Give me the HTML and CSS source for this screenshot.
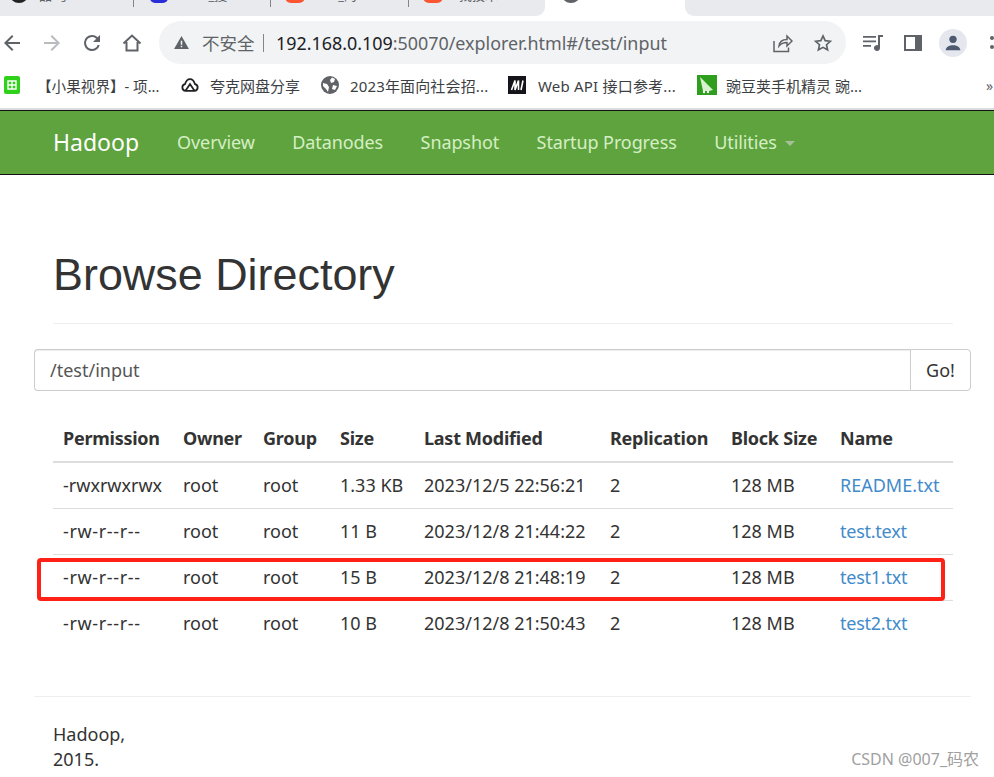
FILE: index.html
```html
<!DOCTYPE html>
<html lang="zh-CN">
<head>
<meta charset="utf-8">
<title>Browsing HDFS</title>
<link rel="stylesheet" href="styles.css">
</head>
<body>
<header class="chrome">
  <div class="tabstrip">
    <div class="tab tab-a"><span class="favicon fav-black"></span><span class="tab-label">品·号</span></div>
    <div class="tab tab-b"><span class="favicon fav-blue"></span><span class="tab-label">csdn_搜</span></div>
    <div class="tab tab-c"><span class="favicon fav-orange"></span><span class="tab-label">007_的</span></div>
    <div class="tab tab-d"><span class="favicon fav-orange"></span><span class="tab-label">找技术</span></div>
    <div class="tab tab-active"><span class="favicon fav-ring"></span><span class="tab-label">Browse</span></div>
    <div class="tab tab-rest"><span class="tab-plus">+</span></div>
  </div>
  <div class="toolbar">
    <svg class="nav-btn" viewBox="0 0 24 24"><path fill="#5f6368" d="M20 11H7.830l5.590-5.590L12 4l-8 8 8 8 1.410-1.410L7.830 13H20z"/></svg>
    <svg class="nav-btn" viewBox="0 0 24 24"><path fill="#b9bbbe" d="M12 4l-1.410 1.410L16.170 11H4v2h12.170l-5.580 5.590L12 20l8-8z"/></svg>
    <svg class="nav-btn" viewBox="0 0 24 24"><path fill="#5f6368" d="M17.650 6.350A7.960 7.960 0 0 0 12 4a8 8 0 1 0 7.730 10h-2.080A6 6 0 1 1 12 6c1.660 0 3.140.69 4.220 1.780L13 11h7V4z"/></svg>
    <svg class="nav-btn" viewBox="0 0 24 24"><path fill="none" stroke="#5f6368" stroke-width="2" d="M6.500 11v8.500h11V11M3.500 12.500 12 4.500l8.500 8"/></svg>
    <div class="omnibox">
      <svg class="omni-warn" viewBox="0 0 16 14"><path fill="#5f6368" d="M8 0l8 14H0z"/><path fill="#f1f3f4" d="M7.200 5h1.600v4.500H7.200zM7.200 10.500h1.600V12H7.200z"/></svg>
      <span class="omni-insecure">不安全</span>
      <span class="omni-sep"></span>
      <span class="omni-url"><span class="omni-host">192.168.0.109</span>:50070/explorer.html#/test/input</span>
      <svg class="omni-icon" viewBox="0 0 20 20"><path fill="none" stroke="#5f6368" stroke-width="1.500" d="M1 8v10.500h14.500v-4M6 13c.5-4 3.500-6.500 8-6.500V3l5 5-5 5V9.500C10.500 9.500 8 10.500 6 13z"/></svg>
      <svg class="omni-icon omni-star" viewBox="0 0 24 24"><path fill="none" stroke="#5f6368" stroke-width="2" d="M12 3.500l2.600 5.700 6.200.7-4.600 4.200 1.300 6.100L12 17.200l-5.500 3 1.300-6.100-4.600-4.200 6.200-.7z"/></svg>
    </div>
    <svg class="tool-icon tool-list" viewBox="0 0 20 16"><path fill="#5f6368" d="M0 1h13v1.800H0zM0 5.500h13v1.800H0zM0 10h8v1.800H0zM15 0h5v2h-3v11a3 3 0 1 1-2-2.800z"/></svg>
    <svg class="tool-icon tool-panel" viewBox="0 0 18 16"><path fill="#5f6368" fill-rule="evenodd" d="M0 0h18v16H0zM2 2v12h9V2z"/></svg>
    <span class="avatar"><svg viewBox="0 0 24 24"><circle cx="12" cy="8" r="4" fill="#4d5a70"/><path fill="#4d5a70" d="M4 20c0-3.500 4-5.500 8-5.500s8 2 8 5.500z"/></svg></span>
    <span class="menu-dots"><i></i><i></i></span>
  </div>
  <div class="bookmarks">
    <div class="bm bm-1"><svg class="bm-icon" viewBox="0 0 16 18"><rect width="16" height="18" rx="2" fill="#2fd11b"/><path fill="none" stroke="#fff" stroke-width="1.400" d="M4 5h8v8H4zM8 5v8M4 9h8"/></svg><span>【小果视界】- 项...</span></div>
    <div class="bm bm-2"><svg class="bm-icon" viewBox="0 0 20 16"><path fill="none" stroke="#202124" stroke-width="2" d="M5 14.500a3.800 3.800 0 0 1-.5-7.500C5.500 3.500 8 1.500 10 1.500s4.500 2 5.500 5.500a3.800 3.800 0 0 1-.5 7.500zM5 14.500 10 7l5 7.500"/></svg><span>夸克网盘分享</span></div>
    <div class="bm bm-3"><svg class="bm-icon" viewBox="0 0 18 18"><circle cx="9" cy="9" r="9" fill="#5f6368"/><path fill="#fff" d="M2 7l4 1 2 3-1 5-2-3-3-3zM11 1.500l3 1.500-1 3-3 1-1-3zM12 9l4 1-2 4-3-1z"/></svg><span>2023年面向社会招...</span></div>
    <div class="bm bm-4"><svg class="bm-icon" viewBox="0 0 18 18"><rect width="18" height="18" fill="#15141a"/><path fill="none" stroke="#fff" stroke-width="1.600" d="M3.500 14 7 4.500V14l3.500-9.500V14M13 14l2-9.500"/></svg><span>Web API 接口参考...</span></div>
    <div class="bm bm-5"><svg class="bm-icon" viewBox="0 0 20 20"><rect width="20" height="20" fill="#2f9e1f"/><path fill="#d6f2d0" d="M3 2c3 3 8 8 13 13l-4 1H6z"/><circle cx="7" cy="17" r="1.200" fill="#fff"/><circle cx="11" cy="17" r="1.200" fill="#fff"/></svg><span>豌豆荚手机精灵 豌...</span></div>
    <span class="bm-more">»</span>
  </div>
</header>

<nav class="navbar">
  <a class="brand">Hadoop</a>
  <a class="nav-link">Overview</a>
  <a class="nav-link">Datanodes</a>
  <a class="nav-link">Snapshot</a>
  <a class="nav-link">Startup Progress</a>
  <a class="nav-link">Utilities<span class="caret"></span></a>
</nav>

<main class="container">
  <div class="page-header"><h1>Browse Directory</h1></div>
  <div class="path-group">
    <div class="path-input">/test/input</div>
    <div class="path-go">Go!</div>
  </div>
  <table class="listing">
    <colgroup>
      <col class="c1"><col class="c2"><col class="c3"><col class="c4"><col class="c5"><col class="c6"><col class="c7"><col class="c8">
    </colgroup>
    <thead>
      <tr><th>Permission</th><th>Owner</th><th>Group</th><th>Size</th><th>Last Modified</th><th>Replication</th><th>Block Size</th><th>Name</th></tr>
    </thead>
    <tbody>
      <tr><td>-rwxrwxrwx</td><td>root</td><td>root</td><td>1.33 KB</td><td>2023/12/5 22:56:21</td><td>2</td><td>128 MB</td><td><a>README.txt</a></td></tr>
      <tr><td class="perm">-rw-r--r--</td><td>root</td><td>root</td><td>11 B</td><td>2023/12/8 21:44:22</td><td>2</td><td>128 MB</td><td><a class="file">test.text</a></td></tr>
      <tr><td class="perm">-rw-r--r--</td><td>root</td><td>root</td><td>15 B</td><td>2023/12/8 21:48:19</td><td>2</td><td>128 MB</td><td><a class="file">test1.txt</a></td></tr>
      <tr><td class="perm">-rw-r--r--</td><td>root</td><td>root</td><td>10 B</td><td>2023/12/8 21:50:43</td><td>2</td><td>128 MB</td><td><a class="file">test2.txt</a></td></tr>
    </tbody>
  </table>
  <footer class="page-footer">
    <p>Hadoop,<br>2015.</p>
  </footer>
</main>
<div class="highlight"></div>
<div class="watermark">CSDN @007_码农</div>
</body>
</html>
```
FILE: styles.css
```css
html, body { margin: 0; padding: 0; height: 777px; overflow: hidden; background: #fff; }
body { font-family: "Noto Sans", "Noto Sans CJK SC", sans-serif; color: #333; font-size: 18px; position: relative; }

/* browser chrome */
.chrome { height: 110px; box-sizing: border-box; display: flex; flex-direction: column; }
.tabstrip { height: 16px; display: flex; background: #fff; flex: none; }
.tab { box-sizing: border-box; height: 16px; padding-bottom: 13px; background: #e8eaed; display: flex; align-items: flex-end; overflow: hidden; position: relative; flex: none; color: #5f6368; font-size: 13px; line-height: 16px; }
.tab:not(.tab-active):not(.tab-rest):not(.tab-d)::after { content: ""; position: absolute; right: 0; top: 0; width: 1px; height: 7px; background: #80868b; }
.tab-a { width: 134px; padding-left: 10px; gap: 11px; }
.tab-b { width: 137px; padding-left: 16px; gap: 12px; }
.tab-c { width: 138px; padding-left: 14px; gap: 11px; }
.tab-d { width: 136px; padding-left: 14px; gap: 16px; border-bottom-right-radius: 9px; }
.tab-active { width: 140px; padding-left: 17px; gap: 10px; background: #fff; }
.tab-rest { flex: 1; padding-left: 20px; border-bottom-left-radius: 9px; }
.tab-plus { font-size: 18px; line-height: 16px; color: #5f6368; }
.favicon { width: 18px; height: 16px; flex: none; display: block; }
.fav-black { background: #222; border-radius: 50%; }
.fav-blue { background: #2a2ed8; border-radius: 0 0 5px 5px; }
.fav-orange { width: 20px; background: #fc5531; border-radius: 0 0 6px 6px; }
.fav-ring { box-sizing: border-box; border: 3px solid #5f6368; border-radius: 50%; }

.toolbar { height: 48px; flex: none; display: flex; align-items: center; position: relative; padding-top: 5px; box-sizing: border-box; }
.nav-btn { width: 24px; height: 24px; flex: none; margin-left: -1px; margin-right: 17px; }
.nav-btn:first-child { margin-left: 0; }
.omnibox { margin-left: -2px; width: 687px; height: 43px; flex: none; background: #f1f3f4; border-radius: 22px; display: flex; align-items: center; box-sizing: border-box; padding-left: 15px; font-size: 18px; color: #5f6368; }
.omni-warn { width: 15px; height: 13px; flex: none; margin-right: 13px; }
.omni-insecure { font-size: 17.500px; width: 52px; flex: none; white-space: nowrap; }
.omni-sep { width: 1px; height: 18px; background: #80868b; margin: 0 12px 0 9px; flex: none; }
.omni-url { flex: none; width: 497px; white-space: nowrap; font-size: 17.900px; }
.omni-host { color: #202124; }
.omni-icon { width: 20px; height: 20px; flex: none; }
.omni-star { margin-left: 20px; }
.tool-icon { flex: none; }
.tool-list { width: 20px; height: 16px; margin-left: 17px; }
.tool-panel { width: 18px; height: 16px; margin-left: 21px; }
.avatar { width: 28px; height: 28px; flex: none; margin-left: 17px; border-radius: 50%; background: #e4e7ee; display: flex; align-items: center; justify-content: center; }
.avatar svg { width: 22px; height: 22px; }
.menu-dots { margin-left: 23px; display: flex; flex-direction: column; gap: 5px; flex: none; }
.menu-dots i { display: block; width: 4px; height: 4px; border-radius: 50%; background: #5f6368; }

.bookmarks { height: 46px; flex: none; display: flex; align-items: center; box-sizing: border-box; border-bottom: 2px solid #dadce0; padding-left: 4px; font-size: 15px; color: #3c4043; white-space: nowrap; padding-bottom: 2px; }
.bm { display: flex; align-items: center; flex: none; }
.bm-icon { flex: none; width: 18px; height: 18px; }
.bm-1 { width: 177px; gap: 17px; font-size: 14.600px; }
.bm-1 .bm-icon { width: 16px; height: 18px; }
.bm-2 { width: 140px; gap: 11px; }
.bm-3 { width: 187px; gap: 11px; letter-spacing: 0.15px; }
.bm-4 { width: 189px; gap: 12px; letter-spacing: 0.2px; }
.bm-5 { gap: 9px; width: 289px; }
.bm-5 .bm-icon { width: 20px; height: 20px; }
.bm-more { color: #5f6368; font-size: 14px; }

/* navbar */
.navbar { height: 65px; box-sizing: border-box; background: #5fa33e; border-top: 1px solid #111; border-bottom: 1px solid #111; display: flex; align-items: center; padding: 0 0 2px 53px; }
.brand { color: #fff; font-size: 23px; margin-right: 38px; }
.nav-link { color: #d5efc5; font-size: 18px; letter-spacing: -0.1px; margin-right: 37.500px; display: flex; align-items: center; }
.caret { width: 0; height: 0; margin-left: 8px; margin-top: 3px; border-left: 5px solid transparent; border-right: 5px solid transparent; border-top: 5px solid #a5c097; }

/* content */
.container { padding: 0 23px 0 34px; }
.page-header { margin: 0 0 25px; padding: 73px 0 21px 19px; height: 149px; box-sizing: border-box; position: relative; }
.page-header::after { content: ""; position: absolute; left: 19px; right: 18px; bottom: 0; height: 1px; background: #eee; }
.page-header h1 { margin: 0; font-family: "Liberation Sans", Arial, sans-serif; font-weight: 400; font-size: 44.900px; line-height: 54px; color: #333; }
.path-group { display: flex; height: 42px; box-sizing: border-box; margin-bottom: 24px; }
.path-input { flex: 1; border: 1px solid #ccc; border-right: 0; border-radius: 4px 0 0 4px; padding: 0 15px; line-height: 40px; color: #555; box-shadow: inset 0 1px 1px rgba(0,0,0,.075); }
.path-go { width: 61px; box-sizing: border-box; text-align: center; border: 1px solid #ccc; border-radius: 0 4px 4px 0; line-height: 40px; color: #333; }

.listing { width: 900px; margin-left: 19px; border-collapse: collapse; table-layout: fixed; font-size: 18px; line-height: 25px; }
.c1 { width: 120px; } .c2 { width: 80px; } .c3 { width: 77px; } .c4 { width: 84px; }
.c5 { width: 186px; } .c6 { width: 121px; } .c7 { width: 109px; } .c8 { width: 123px; }
.listing th { text-align: left; font-weight: 700; letter-spacing: -0.25px; padding: 11px 10px 10px; border-bottom: 2px solid #ddd; white-space: nowrap; }
.listing td { padding: 10px; border-top: 1px solid #ddd; white-space: nowrap; }
.listing tbody tr:first-child td { border-top: 0; }
.listing a { color: #428bca; }
.listing .perm { letter-spacing: 0.65px; }
.listing .file { letter-spacing: -0.25px; }

.page-footer { margin-top: 50px; border-top: 1px solid #eee; padding: 25px 19px 0; }
.page-footer p { margin: 0; line-height: 25px; }

.highlight { position: absolute; left: 37px; top: 558px; width: 908px; height: 43px; box-sizing: border-box; border: 4px solid #ff2116; border-radius: 4px; }
.watermark { position: absolute; right: 15px; top: 749px; font-size: 16px; line-height: 20px; color: #a0a0a0; white-space: nowrap; }
```
